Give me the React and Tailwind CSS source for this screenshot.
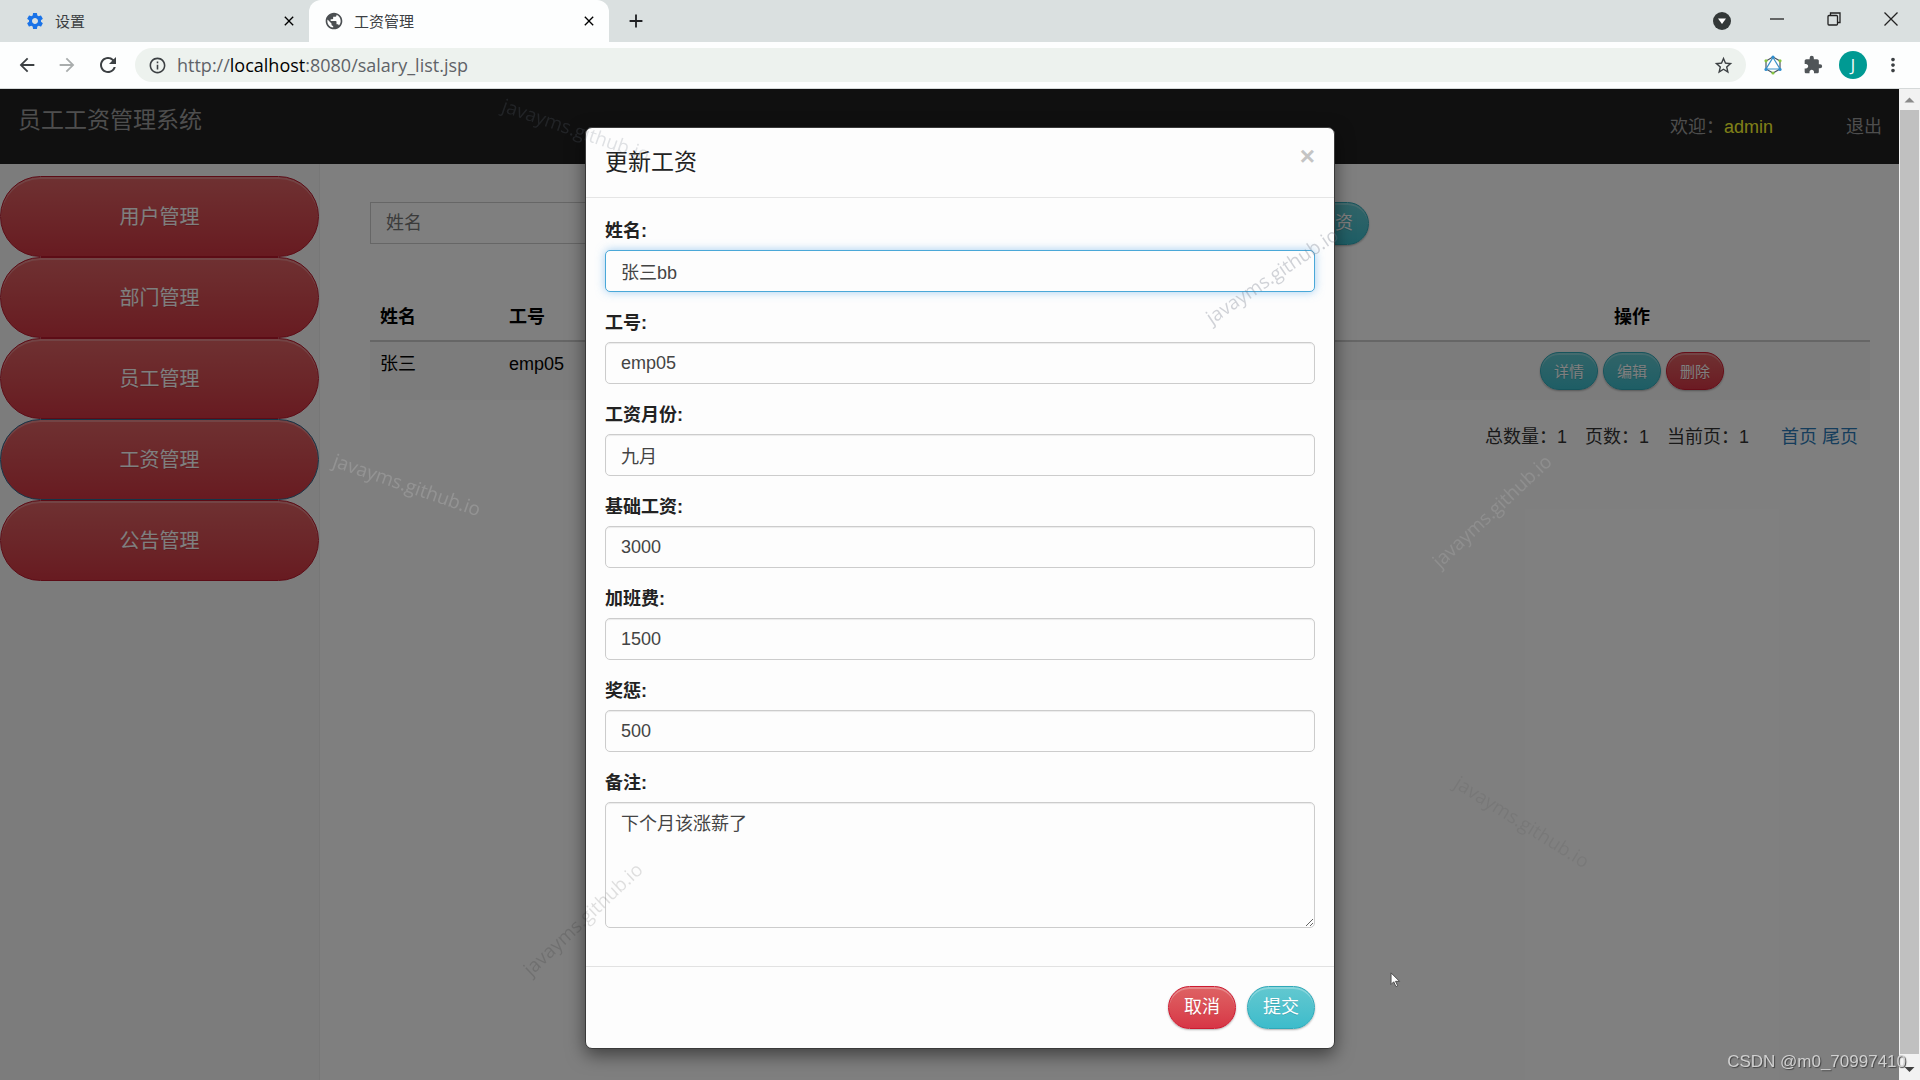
import React, { useState } from "react";
import {
  MdSettings,
  MdPublic,
  MdClose,
  MdAdd,
  MdArrowBack,
  MdArrowForward,
  MdRefresh,
  MdInfoOutline,
  MdStarBorder,
  MdExtension,
  MdMoreVert,
} from "react-icons/md";

const MENU = ["用户管理", "部门管理", "员工管理", "工资管理", "公告管理"];

const COLUMNS = ["工号", "工资月份", "基础工资", "加班费", "奖惩", "备注"];
const ROW = ["emp05", "九月", "3000", "1500", "500", "-"];

const FIELDS = [
  { id: "name", label: "姓名:", value: "张三bb" },
  { id: "empNo", label: "工号:", value: "emp05" },
  { id: "month", label: "工资月份:", value: "九月" },
  { id: "base", label: "基础工资:", value: "3000" },
  { id: "overtime", label: "加班费:", value: "1500" },
  { id: "bonus", label: "奖惩:", value: "500" },
];

const WATERMARKS = [
  { x: 576, y: 130, angle: 19, color: "text-gray-500/20" },
  { x: 407, y: 485, angle: 19, color: "text-white/16" },
  { x: 1492, y: 511, angle: -43, color: "text-white/12" },
  { x: 1272, y: 276, angle: -34, color: "text-gray-500/30" },
  { x: 583, y: 919, angle: -43, color: "text-black/12" },
  { x: 1522, y: 822, angle: 32, color: "text-black/6" },
];

const red =
  "border-[#cc1a30] bg-linear-to-b from-[#de6264] to-[#d73546] text-white shadow-[inset_0_2px_0_rgba(255,255,255,0.25),0_1px_2px_rgba(0,0,0,0.3)]";
const teal =
  "border-[#2fa8b8] bg-linear-to-b from-[#62c8d0] to-[#3cbccb] text-white shadow-[inset_0_2px_0_rgba(255,255,255,0.25),0_1px_2px_rgba(0,0,0,0.3)]";

function PillButton({ color, small, children }) {
  return (
    <button
      type="button"
      className={`rounded-full border text-shadow-2xs ${
        small ? "h-[38px] px-[13px] text-[15px]" : "h-[43px] px-[15px] text-[18px]"
      } ${color}`}
    >
      {children}
    </button>
  );
}

function ExtensionIcon() {
  return (
    <svg viewBox="0 0 20 20" className="h-5 w-5" fill="none">
      <path d="M10 2 17 6v8l-7 4-7-4V6z" stroke="#4a5560" strokeWidth="1.2" />
      <path d="M10 2.5 17 14H3z" stroke="#3a92c8" strokeWidth="1.2" />
      <circle cx="10" cy="2" r="1.6" fill="#2f8fd0" />
      <circle cx="17" cy="14.4" r="1.6" fill="#2f8fd0" />
      <circle cx="3" cy="14.4" r="1.6" fill="#2f8fd0" />
      <circle cx="3" cy="5.8" r="1.6" fill="#86c440" />
      <circle cx="17" cy="5.8" r="1.6" fill="#86c440" />
      <circle cx="10" cy="18" r="1.6" fill="#86c440" />
    </svg>
  );
}

function BrowserChrome() {
  return (
    <div className="font-['Open_Sans','Noto_Sans_CJK_SC',sans-serif] text-[#3c4043]">
      {/* TABS */}
      <div className="flex h-[42px] items-stretch bg-[#dae0e0]">
        <div className="flex w-[309px] items-center gap-2.5 pr-2 pl-[25px]">
          <MdSettings className="h-5 w-5 text-[#1a73e8]" />
          <span className="flex-1 text-[15px]">设置</span>
          <button type="button" aria-label="关闭标签页" className="p-1">
            <MdClose className="h-4 w-4 text-black" />
          </button>
        </div>
        <div className="flex w-[300px] items-center gap-2.5 rounded-t-xl bg-[#fdfefe] pr-2 pl-[15px]">
          <MdPublic className="h-5 w-5 text-[#4b4f52]" />
          <span className="flex-1 text-[15px]">工资管理</span>
          <button type="button" aria-label="关闭标签页" className="p-1">
            <MdClose className="h-4 w-4 text-black" />
          </button>
        </div>
        <button type="button" aria-label="新标签页" className="px-4">
          <MdAdd className="h-[22px] w-[22px] text-[#202124]" />
        </button>
        <div className="ml-auto flex items-center gap-[43px] pr-[22px] pb-1">
          <svg viewBox="0 0 18 18" className="-mr-1 h-[18px] w-[18px] translate-y-0.5">
            <circle cx="9" cy="9" r="9" fill="#333838" />
            <path d="M5 6.5h8L9 12z" fill="#fff" />
          </svg>
          <svg viewBox="0 0 14 14" className="h-3.5 w-3.5" stroke="#222">
            <path d="M0 7h14" strokeWidth="1.3" />
          </svg>
          <svg viewBox="0 0 14 14" className="h-3.5 w-3.5" fill="none" stroke="#222" strokeWidth="1.3">
            <rect x="1" y="3.5" width="9.5" height="9.5" rx="1" />
            <path d="M3.5 3.5V1H13v9.500h-2.500" />
          </svg>
          <svg viewBox="0 0 14 14" className="h-3.5 w-3.5" stroke="#222" strokeWidth="1.3">
            <path d="M.5.5l13 13M13.500.5l-13 13" />
          </svg>
        </div>
      </div>

      {/* TOOLBAR */}
      <div className="flex h-[47px] items-center border-b border-[#d5d9d9] bg-[#fdfefe] pr-[13px] pl-4">
        <div className="flex w-[119px] items-center gap-[18px]">
          <MdArrowBack className="h-[22px] w-[22px]" />
          <MdArrowForward className="h-[22px] w-[22px] text-[#a9adad]" />
          <MdRefresh className="h-6 w-6" />
        </div>
        <div className="flex h-[34px] flex-1 items-center rounded-full bg-[#edf2ee] pr-3 pl-[13px]">
          <MdInfoOutline className="mr-2.5 h-[19px] w-[19px]" />
          <span className="flex-1 text-[18px] text-[#5f6368]">
            http://<span className="text-black">localhost</span>:8080/salary_list.jsp
          </span>
          <MdStarBorder className="h-[21px] w-[21px]" />
        </div>
        <div className="flex items-center gap-3 pl-[13px]">
          <span className="flex w-7 justify-center">
            <ExtensionIcon />
          </span>
          <span className="flex w-7 justify-center">
            <MdExtension className="h-5 w-5 text-[#505558]" />
          </span>
          <span className="flex h-7 w-7 items-center justify-center rounded-full bg-[#009a93] text-base text-white">
            J
          </span>
          <span className="flex w-7 justify-center">
            <MdMoreVert className="h-[22px] w-[22px]" />
          </span>
        </div>
      </div>
    </div>
  );
}

function Scrollbar() {
  return (
    <div className="relative z-30 flex w-[21px] flex-col items-center bg-[#f2f2f2]">
      <svg viewBox="0 0 21 21" className="h-[21px] w-[21px]">
        <path d="M5.500 13.500 10.500 8.500l5 5z" fill="#8a8a8a" />
      </svg>
      <div className="w-[19px] flex-1 bg-[#c0c0c0]" />
      <svg viewBox="0 0 21 26" className="h-[26px] w-[21px]">
        <path d="M5.500 13 10.500 18l5-5z" fill="#404040" />
      </svg>
    </div>
  );
}

function SalaryPage() {
  return (
    <div className="relative flex flex-1 flex-col bg-white">
      <header className="flex h-[75px] justify-between bg-[#202020] pr-[17px] pl-[18px] text-[#9d9d9d]">
        <a href="#home" className="mt-[15px] text-[23px] leading-8">
          员工工资管理系统
        </a>
        <div className="mt-[25px] flex gap-[73px] leading-[26px]">
          <span>
            欢迎：<span className="text-[#ffff30]">admin</span>
          </span>
          <a href="#logout">退出</a>
        </div>
      </header>

      <div className="flex flex-1">
        {/* SIDEBAR */}
        <nav className="flex w-80 flex-col border-r border-[#eee] bg-[#f8f8f8] pt-3">
          {MENU.map((item) => (
            <button
              key={item}
              type="button"
              className={`h-[81px] rounded-full border bg-linear-to-b from-[#de6264] to-[#d03542] text-xl text-white text-shadow-2xs shadow-[inset_0_2px_0_rgba(255,255,255,0.25)] ${
                item === "工资管理" ? "border-[#2c6a90]" : "border-[#b8182c]"
              }`}
            >
              {item}
            </button>
          ))}
        </nav>

        {/* CONTENT */}
        <main className="flex-1 pt-[38px] pr-[29px] pl-[50px] text-[#333]">
          <div className="flex max-w-[999px] justify-between">
            <input
              aria-label="姓名"
              placeholder="姓名"
              className="h-[42px] w-1/3 border border-[#ccc] px-[15px] placeholder:text-[#777]"
            />
            <PillButton color={teal}>添加工资</PillButton>
          </div>

          <table className="mt-[50px] w-full table-fixed text-left leading-[25px] text-black">
            <thead>
              <tr className="border-b-2 border-[#ccc]">
                <th className="w-[129px] p-2.5">姓名</th>
                {COLUMNS.map((col) => (
                  <th key={col} className="p-2.5">
                    {col}
                  </th>
                ))}
                <th className="w-[476px] p-2.5 text-center">操作</th>
              </tr>
            </thead>
            <tbody>
              <tr className="bg-[#f9f9f9] align-top">
                <td className="p-2.5">张三</td>
                {ROW.map((cell) => (
                  <td key={cell} className="p-2.5">
                    {cell}
                  </td>
                ))}
                <td className="p-2.5">
                  <div className="flex justify-center gap-[5px]">
                    <PillButton small color={teal}>详情</PillButton>
                    <PillButton small color={teal}>编辑</PillButton>
                    <PillButton small color={red}>删除</PillButton>
                  </div>
                </td>
              </tr>
            </tbody>
          </table>

          <div className="mt-6 flex justify-end gap-[18px] pr-3 leading-[26px]">
            <span>总数量：1</span>
            <span>页数：1</span>
            <span>当前页：1</span>
            <span className="ml-3.5 flex gap-[5px] text-[#2a7ab8]">
              <a href="#first">首页</a>
              <a href="#last">尾页</a>
            </span>
          </div>
        </main>
      </div>

      {/* BACKDROP */}
      <div className="absolute inset-0 bg-black/50" />
    </div>
  );
}

function SalaryModal() {
  const [values, setValues] = useState(() =>
    Object.fromEntries(FIELDS.map((f) => [f.id, f.value]))
  );

  const control =
    "block w-full rounded-[5px] border border-[#ccc] bg-[#fdfdfd] px-[15px] text-[#444] shadow-[inset_0_1px_1px_rgba(0,0,0,0.075)] outline-none focus:border-[#4aa8d8] focus:shadow-[0_0_10px_rgba(102,175,233,0.6)]";

  return (
    <div className="absolute inset-0 z-20 flex items-start justify-center pt-[38px]">
      <form
        role="dialog"
        aria-label="更新工资"
        className="w-full max-w-[750px] rounded-[7px] border border-[#3a3a3a] bg-[#fdfdfd] text-[#333] shadow-[0_6px_18px_rgba(0,0,0,0.5)]"
      >
        <div className="flex h-[70px] items-start justify-between border-b border-[#e5e5e5] px-[19px] pt-4">
          <h4 className="text-[23px] leading-9 text-[#222]">更新工资</h4>
          <button type="button" aria-label="关闭" className="text-[26px] leading-6 font-bold text-[#c4c4c4]">
            ×
          </button>
        </div>

        <div className="flex flex-col gap-[18px] px-[19px] pt-5 pb-[38px]">
          {FIELDS.map((field) => (
            <div key={field.id}>
              <label htmlFor={field.id} className="mb-[6px] block leading-[26px] font-bold text-[#222]">
                {field.label}
              </label>
              <input
                id={field.id}
                className={`h-[42px] ${control}`}
                autoFocus={field.id === "name"}
                value={values[field.id]}
                onChange={(e) => setValues({ ...values, [field.id]: e.target.value })}
              />
            </div>
          ))}
          <div>
            <label htmlFor="remark" className="mb-[6px] block leading-[26px] font-bold text-[#222]">
              备注:
            </label>
            <textarea
              id="remark"
              defaultValue="下个月该涨薪了"
              className={`h-[126px] py-2 leading-[26px] ${control}`}
            />
          </div>
        </div>

        <div className="flex justify-end gap-[11px] border-t border-[#e2e2e2] px-[19px] py-[19px]">
          <PillButton color={red}>取消</PillButton>
          <PillButton color={teal}>提交</PillButton>
        </div>
      </form>
    </div>
  );
}

export default function App() {
  return (
    <div className="relative flex min-h-screen flex-col overflow-hidden">
      <BrowserChrome />

      <div className="relative flex flex-1 font-['Liberation_Sans','Noto_Sans_CJK_SC',sans-serif] text-[18px]">
        <SalaryPage />
        <Scrollbar />
        <SalaryModal />
      </div>

      {/* WATERMARKS */}
      <div className="pointer-events-none absolute inset-0 z-40 font-['Open_Sans',sans-serif] text-[19px]">
        {WATERMARKS.map((mark) => (
          <span
            key={`${mark.x}-${mark.y}`}
            className={`absolute whitespace-nowrap ${mark.color}`}
            style={{
              left: mark.x,
              top: mark.y,
              transform: `translate(-50%, -50%) rotate(${mark.angle}deg)`,
            }}
          >
            javayms.github.io
          </span>
        ))}
        <span className="absolute right-[14px] bottom-1.5 font-['Liberation_Sans',sans-serif] text-[17px] text-[#d0d0d0] text-shadow-[1px_1px_1px_#444]">
          CSDN @m0_70997410
        </span>
        <svg viewBox="0 0 12 18" className="absolute top-[972px] left-[1390px] h-4 w-[11px]">
          <path d="M1 1v13l3-3 2.500 5.500 2-1L6 10.500h4.500z" fill="#fff" stroke="#444" strokeWidth="1" />
        </svg>
      </div>
    </div>
  );
}
